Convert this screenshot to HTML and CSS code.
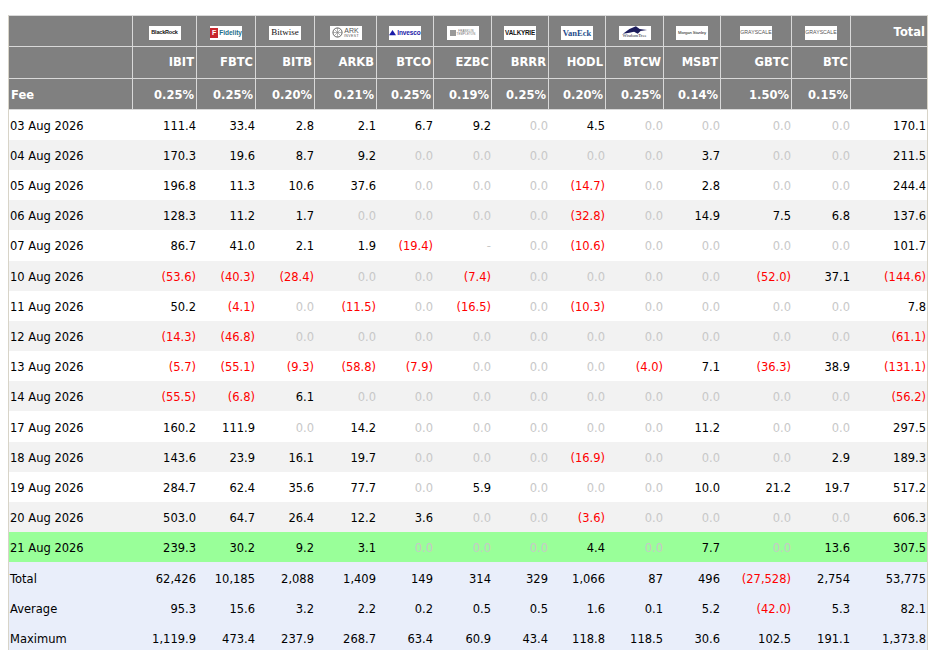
FILE: index.html
```html
<!DOCTYPE html>
<html lang="en">
<head>
<meta charset="utf-8">
<title>Bitcoin ETF Flow</title>
<link rel="stylesheet" href="styles.css">
</head>
<body>
<div class="frame">
<table class="flows">
<colgroup>
<col class="c-date"><col class="c64"><col class="c59"><col class="c59b"><col class="c62"><col class="c57"><col class="c58"><col class="c57"><col class="c57"><col class="c58"><col class="c57"><col class="c71"><col class="c59"><col class="c-total">
</colgroup>
<thead>
<tr class="logos">
<th></th>
<th><span class="logo blk">BlackRock</span></th>
<th><span class="logo fid"><i class="fid-mark">F</i>Fidelity</span></th>
<th><span class="logo bit">Bitwise</span></th>
<th><span class="logo ark"><svg class="ark-mark" viewBox="0 0 12 12"><circle cx="6" cy="6" r="5" fill="none" stroke="#555" stroke-width="1"/><path d="M6 1v10M1 6h10M2.500 2.500l7 7M9.500 2.500l-7 7" stroke="#777" stroke-width=".6"/></svg><span class="ark-text">ARK<small>INVEST</small></span></span></th>
<th><span class="logo inv"><svg class="inv-mark" viewBox="0 0 8 8"><path d="M0 7 4 1l4 6z" fill="#1a1aa8"/></svg>Invesco</span></th>
<th><span class="logo fra"><svg class="fra-mark" viewBox="0 0 8 8"><rect width="8" height="8" fill="#999"/></svg><span class="fra-text">FRANKLIN<br>TEMPLETON</span></span></th>
<th><span class="logo val">VALKYRIE</span></th>
<th><span class="logo van">VanEck</span></th>
<th><span class="logo wis"><svg class="wis-mark" viewBox="0 0 28 8"><path d="M1 8 8 3l7-3 4 3 8 1-7 1-3 3-4-2-5 1z" fill="#1c1c5c"/></svg><span class="wis-text">WisdomTree</span></span></th>
<th><span class="logo mor">Morgan Stanley</span></th>
<th><span class="logo gra">GRAYSCALE</span></th>
<th><span class="logo gra">GRAYSCALE</span></th>
<th class="top-total">Total</th>
</tr>
<tr class="tick">
<th></th><th>IBIT</th><th>FBTC</th><th>BITB</th><th>ARKB</th><th>BTCO</th><th>EZBC</th><th>BRRR</th><th>HODL</th><th>BTCW</th><th>MSBT</th><th>GBTC</th><th>BTC</th><th></th>
</tr>
<tr class="fee">
<th class="label">Fee</th><th>0.25%</th><th>0.25%</th><th>0.20%</th><th>0.21%</th><th>0.25%</th><th>0.19%</th><th>0.25%</th><th>0.20%</th><th>0.25%</th><th>0.14%</th><th>1.50%</th><th>0.15%</th><th></th>
</tr>
</thead>
<tbody>
<tr><td class="label">03 Aug 2026</td><td>111.4</td><td>33.4</td><td>2.8</td><td>2.1</td><td>6.7</td><td>9.2</td><td class="z">0.0</td><td>4.5</td><td class="z">0.0</td><td class="z">0.0</td><td class="z">0.0</td><td class="z">0.0</td><td>170.1</td></tr>
<tr><td class="label">04 Aug 2026</td><td>170.3</td><td>19.6</td><td>8.7</td><td>9.2</td><td class="z">0.0</td><td class="z">0.0</td><td class="z">0.0</td><td class="z">0.0</td><td class="z">0.0</td><td>3.7</td><td class="z">0.0</td><td class="z">0.0</td><td>211.5</td></tr>
<tr><td class="label">05 Aug 2026</td><td>196.8</td><td>11.3</td><td>10.6</td><td>37.6</td><td class="z">0.0</td><td class="z">0.0</td><td class="z">0.0</td><td class="n">(14.7)</td><td class="z">0.0</td><td>2.8</td><td class="z">0.0</td><td class="z">0.0</td><td>244.4</td></tr>
<tr><td class="label">06 Aug 2026</td><td>128.3</td><td>11.2</td><td>1.7</td><td class="z">0.0</td><td class="z">0.0</td><td class="z">0.0</td><td class="z">0.0</td><td class="n">(32.8)</td><td class="z">0.0</td><td>14.9</td><td>7.5</td><td>6.8</td><td>137.6</td></tr>
<tr><td class="label">07 Aug 2026</td><td>86.7</td><td>41.0</td><td>2.1</td><td>1.9</td><td class="n">(19.4)</td><td class="z">-</td><td class="z">0.0</td><td class="n">(10.6)</td><td class="z">0.0</td><td class="z">0.0</td><td class="z">0.0</td><td class="z">0.0</td><td>101.7</td></tr>
<tr><td class="label">10 Aug 2026</td><td class="n">(53.6)</td><td class="n">(40.3)</td><td class="n">(28.4)</td><td class="z">0.0</td><td class="z">0.0</td><td class="n">(7.4)</td><td class="z">0.0</td><td class="z">0.0</td><td class="z">0.0</td><td class="z">0.0</td><td class="n">(52.0)</td><td>37.1</td><td class="n">(144.6)</td></tr>
<tr><td class="label">11 Aug 2026</td><td>50.2</td><td class="n">(4.1)</td><td class="z">0.0</td><td class="n">(11.5)</td><td class="z">0.0</td><td class="n">(16.5)</td><td class="z">0.0</td><td class="n">(10.3)</td><td class="z">0.0</td><td class="z">0.0</td><td class="z">0.0</td><td class="z">0.0</td><td>7.8</td></tr>
<tr><td class="label">12 Aug 2026</td><td class="n">(14.3)</td><td class="n">(46.8)</td><td class="z">0.0</td><td class="z">0.0</td><td class="z">0.0</td><td class="z">0.0</td><td class="z">0.0</td><td class="z">0.0</td><td class="z">0.0</td><td class="z">0.0</td><td class="z">0.0</td><td class="z">0.0</td><td class="n">(61.1)</td></tr>
<tr><td class="label">13 Aug 2026</td><td class="n">(5.7)</td><td class="n">(55.1)</td><td class="n">(9.3)</td><td class="n">(58.8)</td><td class="n">(7.9)</td><td class="z">0.0</td><td class="z">0.0</td><td class="z">0.0</td><td class="n">(4.0)</td><td>7.1</td><td class="n">(36.3)</td><td>38.9</td><td class="n">(131.1)</td></tr>
<tr><td class="label">14 Aug 2026</td><td class="n">(55.5)</td><td class="n">(6.8)</td><td>6.1</td><td class="z">0.0</td><td class="z">0.0</td><td class="z">0.0</td><td class="z">0.0</td><td class="z">0.0</td><td class="z">0.0</td><td class="z">0.0</td><td class="z">0.0</td><td class="z">0.0</td><td class="n">(56.2)</td></tr>
<tr><td class="label">17 Aug 2026</td><td>160.2</td><td>111.9</td><td class="z">0.0</td><td>14.2</td><td class="z">0.0</td><td class="z">0.0</td><td class="z">0.0</td><td class="z">0.0</td><td class="z">0.0</td><td>11.2</td><td class="z">0.0</td><td class="z">0.0</td><td>297.5</td></tr>
<tr><td class="label">18 Aug 2026</td><td>143.6</td><td>23.9</td><td>16.1</td><td>19.7</td><td class="z">0.0</td><td class="z">0.0</td><td class="z">0.0</td><td class="n">(16.9)</td><td class="z">0.0</td><td class="z">0.0</td><td class="z">0.0</td><td>2.9</td><td>189.3</td></tr>
<tr><td class="label">19 Aug 2026</td><td>284.7</td><td>62.4</td><td>35.6</td><td>77.7</td><td class="z">0.0</td><td>5.9</td><td class="z">0.0</td><td class="z">0.0</td><td class="z">0.0</td><td>10.0</td><td>21.2</td><td>19.7</td><td>517.2</td></tr>
<tr><td class="label">20 Aug 2026</td><td>503.0</td><td>64.7</td><td>26.4</td><td>12.2</td><td>3.6</td><td class="z">0.0</td><td class="z">0.0</td><td class="n">(3.6)</td><td class="z">0.0</td><td class="z">0.0</td><td class="z">0.0</td><td class="z">0.0</td><td>606.3</td></tr>
<tr class="latest"><td class="label">21 Aug 2026</td><td>239.3</td><td>30.2</td><td>9.2</td><td>3.1</td><td class="z">0.0</td><td class="z">0.0</td><td class="z">0.0</td><td>4.4</td><td class="z">0.0</td><td>7.7</td><td class="z">0.0</td><td>13.6</td><td>307.5</td></tr>
<tr class="sum"><td class="label">Total</td><td>62,426</td><td>10,185</td><td>2,088</td><td>1,409</td><td>149</td><td>314</td><td>329</td><td>1,066</td><td>87</td><td>496</td><td class="n">(27,528)</td><td>2,754</td><td>53,775</td></tr>
<tr class="sum"><td class="label">Average</td><td>95.3</td><td>15.6</td><td>3.2</td><td>2.2</td><td>0.2</td><td>0.5</td><td>0.5</td><td>1.6</td><td>0.1</td><td>5.2</td><td class="n">(42.0)</td><td>5.3</td><td>82.1</td></tr>
<tr class="sum"><td class="label">Maximum</td><td>1,119.9</td><td>473.4</td><td>237.9</td><td>268.7</td><td>63.4</td><td>60.9</td><td>43.4</td><td>118.8</td><td>118.5</td><td>30.6</td><td>102.5</td><td>191.1</td><td>1,373.8</td></tr>
</tbody>
</table>
</div>
</body>
</html>
```

FILE: styles.css
```css
html, body {
  margin: 0;
  height: 650px;
  overflow: hidden;
  background: #fff;
}
.frame {
  padding: 15px 16px 0 8px;
}
.flows {
  width: 920px;
  table-layout: fixed;
  border-collapse: separate;
  border-spacing: 0;
  border-left: 1px solid #d8d4c8;
  border-right: 1px solid #d8d4c8;
  font: 11.5px/14px "DejaVu Sans", sans-serif;
  color: #000;
}
.c-date { width: 124px; }
.c64 { width: 64px; }
.c59 { width: 59px; }
.c59b { width: 59px; }
.c62 { width: 62px; }
.c57 { width: 57px; }
.c58 { width: 58px; }
.c71 { width: 71px; }
.c-total { width: 76px; }

th, td {
  white-space: nowrap;
  text-align: right;
}
td {
  padding: 0 1px 0 2px;
}
th {
  padding: 0 2px;
}
td.label, th.label { text-align: left; }
td.label { padding-left: 1px; }
thead th {
  background: #808080;
  color: #fff;
  font-weight: bold;
  border-right: 1px solid #d9d9d9;
  border-top: 1px solid #d9d9d9;
  vertical-align: middle;
}
thead th:last-child { border-right: 0; }
.logos th { box-sizing: border-box; height: 31px; text-align: center; padding-top: 3px; }
.logos .top-total { text-align: right; vertical-align: top; padding-top: 9px; }
.tick th { box-sizing: border-box; height: 32px; padding-bottom: 1px; }
.fee th { box-sizing: border-box; height: 31.6px; border-bottom: 1px solid #d9d9d9; padding-top: 3px; }

tbody td {
  height: 30.2px;
  box-sizing: border-box;
  padding-top: 9.1px;
  vertical-align: top;
}
tbody tr:nth-child(even) td { background: #f2f2f2; }
tbody tr.latest td { background: #99ff99; }
tbody tr.sum td { background: #e9eefa; }
.z { color: #c8c8c8; }
.n { color: #f00; }

.logo {
  display: inline-flex;
  align-items: center;
  justify-content: center;
  gap: 1px;
  width: 32px;
  height: 14px;
  background: #fff;
  overflow: hidden;
  vertical-align: middle;
  font-family: "Liberation Sans", sans-serif;
  font-weight: bold;
  font-size: 5px;
  line-height: 1;
  color: #111;
}
.blk { font-size: 5.500px; letter-spacing: -0.2px; }
.fid { color: #1d6f8c; font-size: 6.500px; }
.fid-mark {
  display: inline-block;
  width: 10px;
  height: 10px;
  background: #c8262c;
  color: #fff;
  font-style: normal;
  font-size: 7px;
  line-height: 10px;
  text-align: center;
}
.bit { font-family: "Liberation Serif", serif; font-weight: normal; font-size: 9px; }
.ark { color: #555; font-weight: normal; }
.ark-mark { width: 11px; height: 11px; }
.ark-text { display: flex; flex-direction: column; font-size: 7px; line-height: 6px; }
.ark-text small { font-size: 3.500px; line-height: 4px; letter-spacing: .4px; }
.inv { color: #1a1aa8; font-size: 6.500px; letter-spacing: -0.1px; }
.inv-mark { width: 7px; height: 7px; }
.fra { color: #666; font-weight: normal; font-size: 2.800px; }
.fra-mark { width: 6px; height: 6px; }
.fra-text { line-height: 3px; letter-spacing: .2px; }
.val { font-size: 6.300px; letter-spacing: -0.2px; color: #111; }
.van { font-family: "Liberation Serif", serif; color: #1f4d8c; font-size: 8.500px; }
.wis { flex-direction: column; gap: 0; color: #223; font-family: "Liberation Serif", serif; font-weight: normal; font-size: 4.700px; }
.wis-mark { width: 26px; height: 8px; }
.mor { font-weight: normal; font-size: 4.200px; color: #111; letter-spacing: -0.1px; }
.gra { font-weight: normal; font-size: 5.200px; color: #555; }
```
